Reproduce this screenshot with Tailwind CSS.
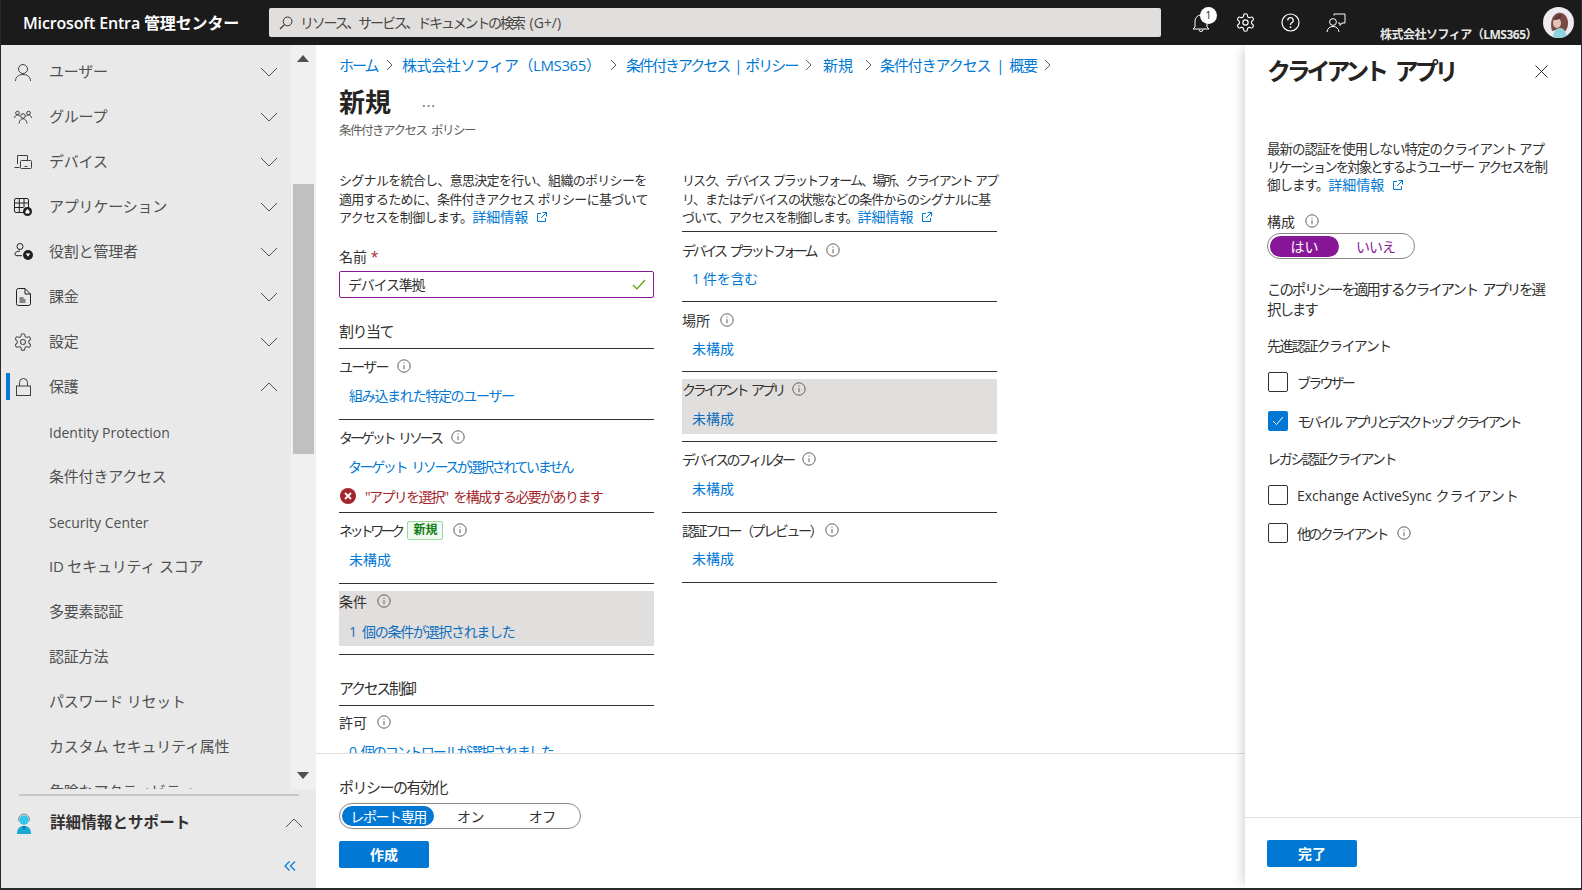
<!doctype html>
<html lang="ja">
<head>
  <meta charset="UTF-8" />
  <title>Microsoft Entra 管理センター</title>
  <script src="https://cdn.jsdelivr.net/npm/@tailwindcss/browser@4"></script>
</head>
<body class="m-0 overflow-hidden font-['Open_Sans','Noto_Sans_CJK_JP',sans-serif] font-features-['palt'] text-[14px] text-[#323130]">
<svg class="hidden">
  <symbol id="down" viewBox="0 0 18 10"><path d="M1 1l8 8 8-8" fill="none" stroke="#505050" stroke-width="1"/></symbol>
  <symbol id="up" viewBox="0 0 18 10"><path d="M1 9l8-8 8 8" fill="none" stroke="#505050" stroke-width="1"/></symbol>
  <symbol id="info" viewBox="0 0 14 14"><circle cx="7" cy="7" r="6.2" fill="none" stroke="#605e5c" stroke-width="1"/><path d="M7 6.2v4M7 3.6v1.1" stroke="#605e5c" stroke-width="1"/></symbol>
  <symbol id="ext" viewBox="0 0 12 12"><path d="M5 2.5H1.5v8h8V7M6.5 1.5h4v4M10.5 1.5L5 7" fill="none" stroke="#0078d4" stroke-width="1"/></symbol>
  <symbol id="sep" viewBox="0 0 7 12"><path d="M1 1l5 5-5 5" fill="none" stroke="#605e5c" stroke-width="1"/></symbol>
  <symbol id="gear" viewBox="0 0 24 24"><path d="M12.22 2h-.44a2 2 0 0 0-2 2v.18a2 2 0 0 1-1 1.73l-.43.25a2 2 0 0 1-2 0l-.15-.08a2 2 0 0 0-2.73.73l-.22.38a2 2 0 0 0 .73 2.73l.15.1a2 2 0 0 1 1 1.72v.51a2 2 0 0 1-1 1.74l-.15.09a2 2 0 0 0-.73 2.73l.22.38a2 2 0 0 0 2.73.73l.15-.08a2 2 0 0 1 2 0l.43.25a2 2 0 0 1 1 1.73V20a2 2 0 0 0 2 2h.44a2 2 0 0 0 2-2v-.18a2 2 0 0 1 1-1.73l.43-.25a2 2 0 0 1 2 0l.15.08a2 2 0 0 0 2.73-.73l.22-.39a2 2 0 0 0-.73-2.73l-.15-.08a2 2 0 0 1-1-1.74v-.5a2 2 0 0 1 1-1.74l.15-.09a2 2 0 0 0 .73-2.73l-.22-.38a2 2 0 0 0-2.73-.73l-.15.08a2 2 0 0 1-2 0l-.43-.25a2 2 0 0 1-1-1.73V4a2 2 0 0 0-2-2z" fill="none" stroke="currentColor" stroke-width="1.3"/><circle cx="12" cy="12" r="3" fill="none" stroke="currentColor" stroke-width="1.3"/></symbol>
</svg>

<div class="flex flex-col h-[890px] w-[1582px] bg-[#2a2a2a] px-px pb-[2px]">
  <!-- top bar -->
  <header class="flex items-center h-[45px] shrink-0 bg-[#1b1b1b] pl-[22px] text-white">
    <div class="w-[246px] shrink-0 text-[16px] font-semibold tracking-[-0.15px] whitespace-nowrap">Microsoft Entra 管理センター</div>
    <div class="flex items-center w-[892px] h-[29px] shrink-0 rounded-[2px] bg-[#e1dfdd] pl-[10px] text-[14px] text-[#484644]">
      <svg class="w-[14px] h-[14px] mr-[7px]" viewBox="0 0 14 14"><circle cx="8.6" cy="5.4" r="4.4" fill="none" stroke="#323130"/><path d="M5.4 8.6L1 13" stroke="#323130" stroke-width="1.2"/></svg>
      <span class="tracking-[-2.2px]">リソース、サービス、ドキュメントの検索</span><span class="ml-[6px]">(G+/)</span>
    </div>
    <div class="flex items-center ml-[17px]">
      <div class="relative flex items-center justify-center w-[45px] h-[45px]">
        <svg class="w-[18px] h-[20px]" viewBox="0 0 18 20"><path d="M3 14V8a6 6 0 0 1 12 0v6l2 2H1zM7 16.5a2 2 0 0 0 4 0" fill="none" stroke="#fff"/></svg>
        <span class="absolute left-[22px] top-[7px] flex items-center justify-center w-[17px] h-[17px] rounded-full bg-white text-[11px] text-[#323130]">1</span>
      </div>
      <div class="flex items-center justify-center w-[45px] h-[45px] text-white"><svg class="w-[21px] h-[21px]"><use href="#gear"/></svg></div>
      <div class="flex items-center justify-center w-[45px] h-[45px]">
        <svg class="w-[19px] h-[19px]" viewBox="0 0 19 19"><circle cx="9.5" cy="9.5" r="8.5" fill="none" stroke="#fff" stroke-width="1.2"/><path d="M6.8 7.4a2.7 2.7 0 1 1 4 2.3c-.9.5-1.3 1-1.3 2v.4" fill="none" stroke="#fff" stroke-width="1.3"/><circle cx="9.5" cy="14.2" r=".9" fill="#fff"/></svg>
      </div>
      <div class="flex items-center justify-center w-[45px] h-[45px]">
        <svg class="w-[20px] h-[20px]" viewBox="0 0 20 20"><circle cx="7" cy="9" r="3.4" fill="none" stroke="#fff"/><path d="M1 19c.4-3.6 2.8-5.6 6-5.6s5.600 2 6 5.600M8 2.500V1h11v9h-3l-2 2.500V10h-2" fill="none" stroke="#fff"/></svg>
      </div>
    </div>
    <div class="ml-[22px] w-[149px] shrink-0 self-end pb-[1px] text-right text-[12px] font-bold tracking-[-0.5px] text-[#e6e6e6] whitespace-nowrap">株式会社ソフィア（LMS365）</div>
    <div class="ml-[14px] w-[31px] h-[31px] rounded-full overflow-hidden shrink-0">
      <svg viewBox="0 0 31 31" class="w-full h-full"><rect width="31" height="31" fill="#efeaf0"/><path d="M9 24c-2-7-1-16 6-18 6-1 10 4 10 10 0 5-2 8-4 9l-4-3z" fill="#7a4a44"/><ellipse cx="14" cy="16" rx="4" ry="5" fill="#e5c4b8"/><path d="M10 31c0-6 3-10 7-10s6 4 7 10z" fill="#8fd3e0"/><path d="M11 13c1-4 4-6 8-5-1 4-4 5-8 5z" fill="#5f3a36"/></svg>
    </div>
  </header>

  <div class="flex flex-1 min-h-0 bg-white">
    <!-- left navigation -->
    <aside class="flex flex-col w-[315px] shrink-0 bg-[#e9e9e9]">
      <div class="flex h-[744px] shrink-0">
        <nav class="w-[290px] overflow-hidden pt-[4px] text-[15px] tracking-[-0.2px] text-[#505050]">
          <div class="flex items-center h-[45px] pl-[5px] pr-[13px]">
            <span class="w-[4px] h-[27px] shrink-0"></span>
            <span class="flex justify-center w-[26px] shrink-0"><svg class="w-[18px] h-[18px]" viewBox="0 0 18 18"><circle cx="9" cy="6" r="4.500" fill="none" stroke="#404040"/><path d="M1.500 18c0-4 3-6.500 7.500-6.500s7.500 2.500 7.500 6.500" fill="none" stroke="#404040"/></svg></span>
            <span class="flex-1 ml-[13px]">ユーザー</span>
            <svg class="w-[18px] h-[10px]"><use href="#down"/></svg>
          </div>
          <div class="flex items-center h-[45px] pl-[5px] pr-[13px]">
            <span class="w-[4px] h-[27px] shrink-0"></span>
            <span class="flex justify-center w-[26px] shrink-0"><svg class="w-[18px] h-[14px]" viewBox="0 0 18 14"><circle cx="3.500" cy="3" r="1.800" fill="none" stroke="#404040"/><circle cx="14.500" cy="3" r="1.800" fill="none" stroke="#404040"/><circle cx="9" cy="6" r="2.300" fill="none" stroke="#404040"/><path d="M.5 8c.3-2 1.500-3 3-3 1 0 1.800.4 2.300 1M17.500 8c-.3-2-1.500-3-3-3-1 0-1.800.4-2.300 1M5 13.500c.3-3 2-4.700 4-4.700s3.700 1.700 4 4.700" fill="none" stroke="#404040"/></svg></span>
            <span class="flex-1 ml-[13px]">グループ</span>
            <svg class="w-[18px] h-[10px]"><use href="#down"/></svg>
          </div>
          <div class="flex items-center h-[45px] pl-[5px] pr-[13px]">
            <span class="w-[4px] h-[27px] shrink-0"></span>
            <span class="flex justify-center w-[26px] shrink-0"><svg class="w-[18px] h-[16px]" viewBox="0 0 18 16"><path d="M3.500 10V1.500h10V6M.5 13.500h5" fill="none" stroke="#404040"/><rect x="6.500" y="6.500" width="11" height="8" rx="1" fill="none" stroke="#404040"/><path d="M10.500 12.500h3" stroke="#404040"/></svg></span>
            <span class="flex-1 ml-[13px]">デバイス</span>
            <svg class="w-[18px] h-[10px]"><use href="#down"/></svg>
          </div>
          <div class="flex items-center h-[45px] pl-[5px] pr-[13px]">
            <span class="w-[4px] h-[27px] shrink-0"></span>
            <span class="flex justify-center w-[26px] shrink-0"><svg class="w-[18px] h-[18px]" viewBox="0 0 18 18"><path d="M2 .5h11a1.500 1.500 0 0 1 1.500 1.500v8M9.500 14.500H2A1.500 1.500 0 0 1 .5 13V2A1.500 1.500 0 0 1 2 .5M.5 5h14M.5 9.500h9M5.300.5v14M10 .5v9" fill="none" stroke="#202020"/><circle cx="13.500" cy="13.500" r="4.500" fill="#202020"/><path d="M13.500 10.800l2 2.700v2h-4v-2z" fill="#fff"/></svg></span>
            <span class="flex-1 ml-[13px]">アプリケーション</span>
            <svg class="w-[18px] h-[10px]"><use href="#down"/></svg>
          </div>
          <div class="flex items-center h-[45px] pl-[5px] pr-[13px]">
            <span class="w-[4px] h-[27px] shrink-0"></span>
            <span class="flex justify-center w-[26px] shrink-0"><svg class="w-[19px] h-[17px]" viewBox="0 0 19 17"><circle cx="6" cy="3.500" r="3" fill="none" stroke="#202020"/><path d="M6 8c-3 0-5 1.500-5 3.200 0 1 .8 1.500 2 1.500h5" fill="none" stroke="#202020"/><circle cx="14" cy="12" r="5" fill="#202020"/><path d="M11.800 10.500h4.400L14 13.800z" fill="#fff"/></svg></span>
            <span class="flex-1 ml-[13px]">役割と管理者</span>
            <svg class="w-[18px] h-[10px]"><use href="#down"/></svg>
          </div>
          <div class="flex items-center h-[45px] pl-[5px] pr-[13px]">
            <span class="w-[4px] h-[27px] shrink-0"></span>
            <span class="flex justify-center w-[26px] shrink-0"><svg class="w-[15px] h-[18px]" viewBox="0 0 15 18"><path d="M2.500.5H9L14.500 6v9.500a2 2 0 0 1-2 2h-10a2 2 0 0 1-2-2v-13a2 2 0 0 1 2-2zM9 .5V6h5.500" fill="none" stroke="#202020"/><path d="M3.500 10h4M3.500 12h6M3.500 14h6" stroke="#202020"/></svg></span>
            <span class="flex-1 ml-[13px]">課金</span>
            <svg class="w-[18px] h-[10px]"><use href="#down"/></svg>
          </div>
          <div class="flex items-center h-[45px] pl-[5px] pr-[13px]">
            <span class="w-[4px] h-[27px] shrink-0"></span>
            <span class="flex justify-center w-[26px] shrink-0 text-[#505050]"><svg class="w-[20px] h-[20px]"><use href="#gear"/></svg></span>
            <span class="flex-1 ml-[13px]">設定</span>
            <svg class="w-[18px] h-[10px]"><use href="#down"/></svg>
          </div>
          <div class="flex items-center h-[45px] pl-[5px] pr-[13px]">
            <span class="w-[4px] h-[27px] shrink-0 bg-[#0078d4]"></span>
            <span class="flex justify-center w-[26px] shrink-0"><svg class="w-[15px] h-[18px]" viewBox="0 0 15 18"><path d="M3.500 8V4.500a4 4 0 0 1 8 0V8" fill="none" stroke="#404040"/><rect x=".5" y="8" width="14" height="9.500" fill="none" stroke="#404040"/></svg></span>
            <span class="flex-1 ml-[13px]">保護</span>
            <svg class="w-[18px] h-[10px]"><use href="#up"/></svg>
          </div>
          <div class="flex items-center h-[45px] pl-[48px] pt-[1px] text-[14px] tracking-normal">Identity Protection</div>
          <div class="flex items-center h-[45px] pl-[48px]">条件付きアクセス</div>
          <div class="flex items-center h-[45px] pl-[48px] pt-[1px] text-[14px] tracking-normal">Security Center</div>
          <div class="flex items-center h-[45px] pl-[48px]">ID セキュリティ スコア</div>
          <div class="flex items-center h-[45px] pl-[48px]">多要素認証</div>
          <div class="flex items-center h-[45px] pl-[48px]">認証方法</div>
          <div class="flex items-center h-[45px] pl-[48px]">パスワード リセット</div>
          <div class="flex items-center h-[45px] pl-[48px]">カスタム セキュリティ属性</div>
          <div class="flex items-center h-[45px] pl-[48px]">危険なアクティビティ</div>
        </nav>
        <!-- scrollbar -->
        <div class="flex flex-col w-[25px] bg-[#f0f0f0]">
          <svg class="w-[12px] h-[7px] ml-[6px] mt-[10px] shrink-0" viewBox="0 0 12 7"><path d="M6 0l6 7H0z" fill="#505050"/></svg>
          <div class="w-[21px] h-[270px] ml-[2px] mt-[122px] shrink-0 bg-[#c0c0c0]"></div>
          <svg class="w-[12px] h-[7px] ml-[6px] mt-[318px] shrink-0" viewBox="0 0 12 7"><path d="M6 7l6-7H0z" fill="#505050"/></svg>
        </div>
      </div>
      <div class="ml-[18px] mr-[17px] mt-[5px] h-[2px] bg-[#c8c8c8]"></div>
      <div class="flex items-center h-[54px] pl-[14px] pr-[13px]">
        <svg class="w-[18px] h-[21px] shrink-0" viewBox="0 0 18 21"><path d="M2 21c0-6 3-8 7-8s7 2 7 8z" fill="#19a7d4"/><circle cx="9" cy="7" r="4.800" fill="#35c5ea"/><path d="M3.500 8V6.500a5.500 5.500 0 0 1 11 0V8" fill="none" stroke="#888"/><path d="M7.500 13h3L9 17z" fill="#0a6a96"/></svg>
        <span class="flex-1 ml-[17px] text-[15.500px] font-bold tracking-[0.1px] text-[#323130]">詳細情報とサポート</span>
        <svg class="w-[18px] h-[10px]"><use href="#up"/></svg>
      </div>
      <div class="flex justify-end pr-[20px] pt-[11px]">
        <svg class="w-[12px] h-[10px]" viewBox="0 0 12 10"><path d="M5.500.5L1 5l4.500 4.500M11 .5L6.500 5 11 9.500" fill="none" stroke="#0078d4" stroke-width="1.200"/></svg>
      </div>
    </aside>

    <!-- main blade -->
    <main class="flex flex-col w-[929px] shrink-0 min-w-0">
      <div class="flex-1 min-h-0 overflow-hidden pl-[23px] pt-[9px]">
        <div class="flex items-center h-[22px] text-[15px] text-[#0078d4] whitespace-nowrap">
          <span class="w-[39px] tracking-[-2px]">ホーム</span>
          <svg class="w-[7px] h-[12px] ml-[8px] mr-[9px]"><use href="#sep"/></svg>
          <span class="w-[192px] tracking-[-0.4px]">株式会社ソフィア（LMS365）</span>
          <svg class="w-[7px] h-[12px] ml-[16px] mr-[9px]"><use href="#sep"/></svg>
          <span class="w-[169px] tracking-[-2px] [word-spacing:3px]">条件付きアクセス | ポリシー</span>
          <svg class="w-[7px] h-[12px] ml-[10px] mr-[11px]"><use href="#sep"/></svg>
          <span class="w-[32px]">新規</span>
          <svg class="w-[7px] h-[12px] ml-[10px] mr-[8px]"><use href="#sep"/></svg>
          <span class="w-[155px] tracking-[-1.1px] [word-spacing:3px]">条件付きアクセス | 概要</span>
          <svg class="w-[7px] h-[12px] ml-[9px]"><use href="#sep"/></svg>
        </div>
        <div class="flex items-center h-[26px] mt-[13px]">
          <h1 class="w-[83px] text-[26px] font-bold leading-[26px] text-[#252423]">新規</h1>
          <span class="text-[14px] leading-[14px] tracking-[1px] text-[#605e5c]">...</span>
        </div>
        <div class="h-[16px] mt-[8px] text-[12.500px] tracking-[-1.5px] [word-spacing:3px] leading-[16px] text-[#605e5c]">条件付きアクセス ポリシー</div>

        <div class="grid grid-cols-[315px_315px] gap-x-[28px] mt-[32px]">
          <!-- left column -->
          <div>
            <p class="text-[13px] tracking-[-0.7px] leading-[18.5px] h-[56px] whitespace-nowrap">シグナルを統合し、意思決定を行い、組織のポリシーを<br>適用するために、条件付きアクセス ポリシーに基づいて<br>アクセスを制御します。<span class="text-[14px] tracking-normal text-[#0078d4]">詳細情報 <svg class="inline w-[12px] h-[12px] ml-[4px] align-[-1px]"><use href="#ext"/></svg></span></p>
            <div class="h-[20px] mt-[20px] leading-[20px]">名前 <span class="text-[#a4262c]">*</span></div>
            <div class="flex items-center justify-between h-[27px] mt-[4px] rounded-[2px] border border-[#881798] pl-[8px] pr-[7px]">
              <span class="tracking-[-1.2px]">デバイス準拠</span>
              <svg class="w-[14px] h-[11px]" viewBox="0 0 14 11"><path d="M1 6l4 4 8-9" fill="none" stroke="#57a300" stroke-width="1.200"/></svg>
            </div>
            <div class="flex items-center h-[29px] mt-[22px] pb-[5px] border-b border-[#323130] text-[15px] tracking-[-1.5px]">割り当て</div>

            <div class="h-[71px] pt-[7px] border-b border-[#323130]">
              <div class="flex items-center h-[20px]"><span class="tracking-[-1.7px]">ユーザー</span><svg class="w-[14px] h-[14px] ml-[9px]"><use href="#info"/></svg></div>
              <div class="h-[20px] mt-[10px] pl-[10px] tracking-[-1.3px] leading-[20px] text-[#0078d4]">組み込まれた特定のユーザー</div>
            </div>
            <div class="h-[93px] pt-[7px] border-b border-[#323130]">
              <div class="flex items-center h-[20px]"><span class="tracking-[-3.1px] [word-spacing:4px]">ターゲット リソース</span><svg class="w-[14px] h-[14px] ml-[10px]"><use href="#info"/></svg></div>
              <div class="h-[20px] mt-[10px] pl-[9px] tracking-[-2.4px] [word-spacing:4px] leading-[20px] text-[#0078d4]">ターゲット リソースが選択されていません</div>
              <div class="flex items-center h-[20px] mt-[9px] text-[#a4262c]">
                <svg class="w-[16px] h-[16px] mr-[9px] ml-px" viewBox="0 0 16 16"><circle cx="8" cy="8" r="8" fill="#a4262c"/><path d="M5 5l6 6M11 5l-6 6" stroke="#fff" stroke-width="1.800"/></svg>
                <span class="tracking-[-1.6px] [word-spacing:4px]">"アプリを選択" を構成する必要があります</span>
              </div>
            </div>
            <div class="h-[71px] pt-[7px] border-b border-[#323130]">
              <div class="flex items-center h-[20px]"><span class="tracking-[-3.6px]">ネットワーク</span>
                <span class="flex items-center justify-center w-[36px] h-[19px] ml-[6px] rounded-[2px] border border-[#9fd89f] bg-[#f1faf1] text-[12px] font-bold text-[#107c10]">新規</span>
                <svg class="w-[14px] h-[14px] ml-[10px]"><use href="#info"/></svg>
              </div>
              <div class="h-[20px] mt-[10px] pl-[10px] leading-[20px] text-[#0078d4]">未構成</div>
            </div>
            <div class="h-[71px] pt-[7px] border-b border-[#323130]">
              <div class="h-[55px] bg-[#e1dfdd]">
                <div class="flex items-center h-[20px]">条件<svg class="w-[14px] h-[14px] ml-[10px]"><use href="#info"/></svg></div>
                <div class="h-[20px] mt-[11px] pl-[10px] tracking-[-1.3px] [word-spacing:4px] leading-[20px] text-[#106ebe]">1 個の条件が選択されました</div>
              </div>
            </div>
            <div class="flex items-end h-[51px] pb-[5px] border-b border-[#323130] text-[15px] tracking-[-2.3px]"><span class="leading-[24px]">アクセス制御</span></div>
            <div class="pt-[6px]">
              <div class="flex items-center h-[20px]">許可<svg class="w-[14px] h-[14px] ml-[10px]"><use href="#info"/></svg></div>
              <div class="h-[20px] mt-[10px] pl-[10px] tracking-[-2px] [word-spacing:4px] leading-[20px] text-[#0078d4]">0 個のコントロールが選択されました</div>
            </div>
          </div>

          <!-- right column -->
          <div>
            <p class="text-[13px] tracking-[-1.1px] leading-[18.5px] h-[61px] pb-0 border-b border-[#323130] whitespace-nowrap"><span class="tracking-[-1.9px] [word-spacing:2px]">リスク、デバイス プラットフォーム、場所、クライアント アプ</span><br>リ、またはデバイスの状態などの条件からのシグナルに基<br>づいて、アクセスを制御します。<span class="text-[14px] tracking-normal text-[#0078d4]">詳細情報 <svg class="inline w-[12px] h-[12px] ml-[4px] align-[-1px]"><use href="#ext"/></svg></span></p>
            <div class="h-[70px] pt-[8px] border-b border-[#323130]">
              <div class="flex items-center h-[20px]"><span class="tracking-[-3.2px] [word-spacing:4px]">デバイス プラットフォーム</span><svg class="w-[14px] h-[14px] ml-[11px]"><use href="#info"/></svg></div>
              <div class="h-[20px] mt-[9px] pl-[10px] tracking-[-0.3px] leading-[20px] text-[#0078d4]">1 件を含む</div>
            </div>
            <div class="h-[70px] pt-[8px] border-b border-[#323130]">
              <div class="flex items-center h-[20px]">場所<svg class="w-[14px] h-[14px] ml-[10px]"><use href="#info"/></svg></div>
              <div class="h-[20px] mt-[9px] pl-[10px] leading-[20px] text-[#0078d4]">未構成</div>
            </div>
            <div class="h-[70px] pt-[7px] border-b border-[#323130]">
              <div class="h-[55px] bg-[#e1dfdd]">
                <div class="flex items-center h-[20px]"><span class="tracking-[-3.2px] [word-spacing:4px]">クライアント アプリ</span><svg class="w-[14px] h-[14px] ml-[9px]"><use href="#info"/></svg></div>
                <div class="h-[20px] mt-[10px] pl-[10px] leading-[20px] text-[#106ebe]">未構成</div>
              </div>
            </div>
            <div class="h-[71px] pt-[7px] border-b border-[#323130]">
              <div class="flex items-center h-[20px]"><span class="tracking-[-2.8px]">デバイスのフィルター</span><svg class="w-[14px] h-[14px] ml-[9px]"><use href="#info"/></svg></div>
              <div class="h-[20px] mt-[10px] pl-[10px] leading-[20px] text-[#0078d4]">未構成</div>
            </div>
            <div class="h-[70px] pt-[7px] border-b border-[#323130]">
              <div class="flex items-center h-[20px]"><span class="tracking-[-2.4px]">認証フロー（プレビュー）</span><svg class="w-[14px] h-[14px] ml-[4px]"><use href="#info"/></svg></div>
              <div class="h-[20px] mt-[9px] pl-[10px] leading-[20px] text-[#0078d4]">未構成</div>
            </div>
          </div>
        </div>
      </div>

      <!-- bottom bar -->
      <div class="h-[135px] shrink-0 border-t border-[#e1dfdd] pl-[23px] pt-[23px]">
        <div class="h-[20px] leading-[20px] text-[15px] tracking-[-1.500px]">ポリシーの有効化</div>
        <div class="flex items-center w-[242px] h-[26px] mt-[6px] rounded-full border border-[#8a8886] px-[2px]">
          <span class="flex items-center justify-center w-[93px] h-[20px] rounded-full bg-[#0078d4] tracking-[-1.4px] text-white">レポート専用</span>
          <span class="flex items-center justify-center w-[73px] tracking-[-0.5px]">オン</span>
          <span class="flex items-center justify-center w-[72px] tracking-[-0.5px]">オフ</span>
        </div>
        <button class="block w-[90px] h-[27px] mt-[12px] rounded-[2px] bg-[#0078d4] text-[14px] font-bold text-white">作成</button>
      </div>
    </main>

    <!-- right panel -->
    <section class="flex flex-col flex-1 min-w-0 shadow-[-6px_0_10px_-4px_rgba(0,0,0,0.18)] z-10 bg-white">
      <div class="flex-1 min-h-0 pl-[22px] pr-[30px]">
        <div class="flex items-center justify-between h-[52px] pb-[1px]">
          <h2 class="text-[24px] font-semibold tracking-[-4.2px] [word-spacing:8px] text-[#252423] whitespace-nowrap">クライアント アプリ</h2>
          <svg class="w-[13px] h-[13px] mr-[3px] mt-[2px]" viewBox="0 0 13 13"><path d="M.5.5l12 12M12.500.5l-12 12" stroke="#323130" stroke-width="1"/></svg>
        </div>
        <p class="mt-[43px] text-[13.500px] tracking-[-1px] leading-[18px] whitespace-nowrap">最新の認証を使用しない特定のクライアント アプ<br><span class="tracking-[-2px] [word-spacing:3px]">リケーションを対象とするようユーザー アクセスを制</span><br>御します。<span class="text-[14px] tracking-normal text-[#0078d4]">詳細情報 <svg class="inline w-[12px] h-[12px] ml-[4px] align-[-1px]"><use href="#ext"/></svg></span></p>
        <div class="flex items-center h-[20px] mt-[17px]">構成<svg class="w-[14px] h-[14px] ml-[10px]"><use href="#info"/></svg></div>
        <div class="flex items-center w-[148px] h-[26px] mt-[2px] rounded-full border border-[#8a8886] px-[2px]">
          <span class="flex items-center justify-center w-[70px] h-[21px] rounded-full bg-[#881798] text-white">はい</span>
          <span class="flex items-center justify-center w-[74px] tracking-[-1px] text-[#881798]">いいえ</span>
        </div>
        <p class="mt-[21px] text-[14.500px] tracking-[-2.100px] [word-spacing:3px] leading-[20px] whitespace-nowrap">このポリシーを適用するクライアント アプリを選<br>択します</p>
        <div class="h-[20px] mt-[16px] tracking-[-1.6px] leading-[20px]">先進認証クライアント</div>
        <div class="flex items-center h-[20px] mt-[16px] pl-px">
          <span class="w-[20px] h-[20px] shrink-0 rounded-[2px] border border-[#323130]"></span>
          <span class="ml-[9px] tracking-[-2.8px]">ブラウザー</span>
        </div>
        <div class="flex items-center h-[20px] mt-[19px] pl-px">
          <span class="flex items-center justify-center w-[20px] h-[20px] shrink-0 rounded-[2px] bg-[#0078d4]"><svg class="w-[12px] h-[10px]" viewBox="0 0 12 10"><path d="M1 5l3.500 3.500L11 1" fill="none" stroke="#fff"/></svg></span>
          <span class="ml-[9px] tracking-[-3.3px] [word-spacing:4px] whitespace-nowrap">モバイル アプリとデスクトップ クライアント</span>
        </div>
        <div class="h-[20px] mt-[18px] tracking-[-2.3px] leading-[20px]">レガシ認証クライアント</div>
        <div class="flex items-center h-[20px] mt-[16px] pl-px">
          <span class="w-[20px] h-[20px] shrink-0 rounded-[2px] border border-[#323130]"></span>
          <span class="ml-[9px]">Exchange ActiveSync クライアント</span>
        </div>
        <div class="flex items-center h-[20px] mt-[18px] pl-px">
          <span class="w-[20px] h-[20px] shrink-0 rounded-[2px] border border-[#323130]"></span>
          <span class="ml-[9px] tracking-[-2.7px]">他のクライアント</span>
          <svg class="w-[14px] h-[14px] ml-[10px]"><use href="#info"/></svg>
        </div>
      </div>
      <div class="h-[71px] shrink-0 border-t border-[#e1dfdd] pl-[22px] pt-[22px]">
        <button class="block w-[90px] h-[27px] rounded-[2px] bg-[#0078d4] text-[14px] font-bold text-white">完了</button>
      </div>
    </section>
  </div>
</div>
</body>
</html>
